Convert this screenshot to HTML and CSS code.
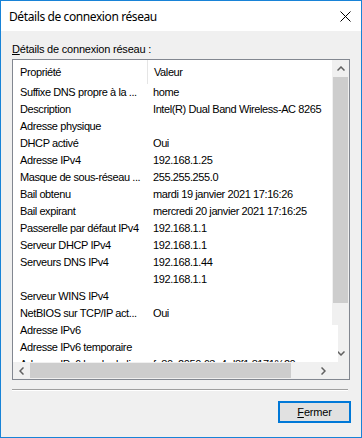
FILE: index.html
```html
<!DOCTYPE html>
<html lang="fr">
<head>
    <meta charset="UTF-8">
    <title>Détails de connexion réseau</title>
    <link rel="stylesheet" href="styles.css">
</head>
<body>
<div class="window">
    <div class="titlebar">
        <span class="title">Détails de connexion réseau</span>
        <svg class="close-icon" width="11" height="11" viewBox="0 0 11 11">
            <path d="M0.5 0.5 L10.5 10.5 M10.5 0.5 L0.5 10.5" stroke="#000" stroke-width="1" fill="none"/>
        </svg>
    </div>

    <div class="content">
        <div class="group-label"><u>D</u>étails de connexion réseau :</div>

        <div class="listbox">
            <div class="list-view">
                <div class="list-head">
                    <div class="col1">Propriété</div>
                    <div class="col2">Valeur</div>
                </div>
                <div class="row"><div class="col1">Suffixe DNS propre à la ...</div><div class="col2">home</div></div>
                <div class="row"><div class="col1">Description</div><div class="col2">Intel(R) Dual Band Wireless-AC 8265</div></div>
                <div class="row"><div class="col1">Adresse physique</div><div class="col2"></div></div>
                <div class="row"><div class="col1">DHCP activé</div><div class="col2">Oui</div></div>
                <div class="row"><div class="col1">Adresse IPv4</div><div class="col2">192.168.1.25</div></div>
                <div class="row"><div class="col1">Masque de sous-réseau ...</div><div class="col2">255.255.255.0</div></div>
                <div class="row"><div class="col1">Bail obtenu</div><div class="col2">mardi 19 janvier 2021 17:16:26</div></div>
                <div class="row"><div class="col1">Bail expirant</div><div class="col2">mercredi 20 janvier 2021 17:16:25</div></div>
                <div class="row"><div class="col1">Passerelle par défaut IPv4</div><div class="col2">192.168.1.1</div></div>
                <div class="row"><div class="col1">Serveur DHCP IPv4</div><div class="col2">192.168.1.1</div></div>
                <div class="row"><div class="col1">Serveurs DNS IPv4</div><div class="col2">192.168.1.44</div></div>
                <div class="row"><div class="col1"></div><div class="col2">192.168.1.1</div></div>
                <div class="row"><div class="col1">Serveur WINS IPv4</div><div class="col2"></div></div>
                <div class="row"><div class="col1">NetBIOS sur TCP/IP act...</div><div class="col2">Oui</div></div>
                <div class="row"><div class="col1">Adresse IPv6</div><div class="col2"></div></div>
                <div class="row"><div class="col1">Adresse IPv6 temporaire</div><div class="col2"></div></div>
                <div class="row"><div class="col1">Adresse IPv6 locale de lien</div><div class="col2">fe80::2050:63a4:d8f1:8171%20</div></div>
            </div>

            <div class="vscroll">
                <div class="sb-button">
                    <svg width="8" height="5" viewBox="0 0 8 5"><polyline points="0.5,4.5 4,1 7.5,4.5" stroke="#606060" stroke-width="1.5" fill="none"/></svg>
                </div>
                <div class="sb-thumb-v"></div>
                <div class="sb-track"></div>
                <div class="sb-button">
                    <svg width="8" height="5" viewBox="0 0 8 5"><polyline points="0.5,0.5 4,4 7.5,0.5" stroke="#606060" stroke-width="1.5" fill="none"/></svg>
                </div>
            </div>

            <div class="hscroll">
                <div class="sb-button">
                    <svg width="5" height="8" viewBox="0 0 5 8"><polyline points="4.5,0.5 1,4 4.5,7.5" stroke="#606060" stroke-width="1.5" fill="none"/></svg>
                </div>
                <div class="sb-thumb-h"></div>
                <div class="sb-track"></div>
                <div class="sb-button">
                    <svg width="5" height="8" viewBox="0 0 5 8"><polyline points="0.5,0.5 4,4 0.5,7.5" stroke="#606060" stroke-width="1.5" fill="none"/></svg>
                </div>
            </div>

            <div class="corner"></div>

            <!-- zone mal repeinte au-dessus de la barre verticale -->
            <div class="repaint"></div>
        </div>

        <div class="separator"></div>

        <div class="footer">
            <button class="close-button"><u>F</u>ermer</button>
        </div>
    </div>
</div>
</body>
</html>
```

FILE: styles.css
```css
* {
    box-sizing: border-box;
}

body {
    margin: 0;
    font-family: 'Liberation Sans', Arial, sans-serif;
    font-size: 11px;
    letter-spacing: -0.4px;
    color: #000;
}

.window {
    width: 362px;
    height: 438px;
    border: 1px solid #1883d7;
    background-color: #f0f0f0;
    display: flex;
    flex-direction: column;
}

.titlebar {
    height: 30px;
    flex-shrink: 0;
    background-color: #fff;
    display: flex;
    align-items: center;
    justify-content: space-between;
    padding: 0 10px 0 8px;
}

.title {
    font-family: 'Noto Sans', 'Liberation Sans', sans-serif;
    font-size: 12px;
    letter-spacing: -0.4px;
}

.close-icon {
    display: block;
}

.content {
    padding: 11px 11px 0 11px;
}

.group-label {
    line-height: 15px;
    margin-bottom: 2px;
    white-space: nowrap;
    letter-spacing: -0.2px;
}

/* liste avec barres de défilement */
.listbox {
    position: relative;
    width: 338px;
    height: 321px;
    border: 1px solid #828790;
    background-color: #fff;
    display: grid;
    grid-template-columns: 319px 17px;
    grid-template-rows: 302px 17px;
}

.list-view {
    overflow: hidden;
    background-color: #fff;
}

.list-head,
.row {
    display: flex;
    white-space: nowrap;
}

.list-head {
    height: 24px;
    line-height: 24px;
}

.row {
    height: 17px;
    line-height: 17px;
}

.col1 {
    width: 134px;
    flex-shrink: 0;
    padding-left: 7px;
    overflow: hidden;
}

.col2 {
    flex-shrink: 0;
    padding-left: 6px;
}

.list-head .col2 {
    border-left: 1px solid #e5e5e5;
}

.vscroll,
.hscroll,
.corner {
    background-color: #f0f0f0;
}

.vscroll {
    display: flex;
    flex-direction: column;
}

.hscroll {
    display: flex;
}

.sb-button {
    width: 17px;
    height: 17px;
    flex-shrink: 0;
    display: flex;
    align-items: center;
    justify-content: center;
}

.sb-button svg {
    display: block;
}

.sb-thumb-v {
    height: 226px;
    margin: 0 1px;
    background-color: #cdcdcd;
}

.sb-thumb-h {
    width: 261px;
    margin: 1px 0;
    background-color: #cdcdcd;
}

.sb-track {
    flex: 1;
}

.repaint {
    position: absolute;
    top: 265px;
    left: 319px;
    width: 6px;
    height: 37px;
    background-color: #fff;
}

.separator {
    margin: 9px 2px 0 0;
    border-top: 1px solid #a0a0a0;
    border-bottom: 1px solid #fff;
}

.footer {
    display: flex;
    justify-content: flex-end;
    margin: 10px -1px 0 0;
}

.close-button {
    width: 73px;
    height: 22px;
    padding: 0;
    border: 2px solid #0078d7;
    background-color: #e1e1e1;
    font-family: 'Liberation Sans', Arial, sans-serif;
    font-size: 11px;
    letter-spacing: -0.2px;
    color: #000;
}
```
